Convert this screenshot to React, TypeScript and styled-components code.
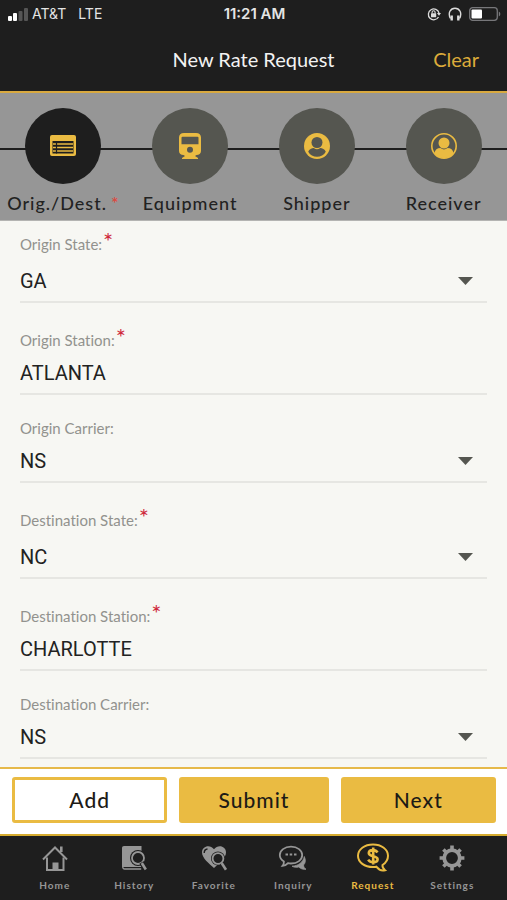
import React, { useId } from "react";
import styled, { createGlobalStyle } from "styled-components";

const gold = "#eabb42";
const ink = "#1e1e1e";

const GlobalStyle = createGlobalStyle`
  *, *::before, *::after { box-sizing: border-box; }
  body {
    margin: 0;
    background: ${ink};
    font-family: Lato, "Liberation Sans", sans-serif;
    font-variant-ligatures: none;
  }
  button, input, select { font: inherit; margin: 0; border: 0; padding: 0; background: none; color: inherit; }
  button { cursor: pointer; }
`;

const Screen = styled.div`
  min-height: 100vh;
  display: flex;
  flex-direction: column;
  background: #f7f7f3;
`;

const StatusBar = styled.div`
  display: grid;
  grid-template-columns: 1fr auto 1fr;
  align-items: center;
  height: 28px;
  padding: 0 6px 0 8px;
  background: ${ink};
  color: #e4e4e4;
  font: 400 14px/20px Inter, "Liberation Sans", sans-serif;
`;

const StatusGroup = styled.div<{ $end?: boolean }>`
  display: flex;
  align-items: center;
  justify-content: ${(p) => (p.$end ? "flex-end" : "flex-start")};
  gap: ${(p) => (p.$end ? 7 : 4)}px;
`;

const Network = styled.span`
  margin-left: 8px;
`;

const Clock = styled.time`
  font-size: 15px;
  font-weight: 600;
`;

const Header = styled.header`
  display: grid;
  grid-template-columns: 1fr auto 1fr;
  align-items: center;
  height: 65px;
  padding: 0 28px 2px;
  background: ${ink};
  border-bottom: 2px solid #d9a93f;
  color: #f2f2f2;
`;

const Title = styled.h1`
  grid-column: 2;
  margin: 0;
  font-size: 20px;
  line-height: 24px;
  font-weight: 400;
`;

const ClearButton = styled.button`
  justify-self: end;
  color: #dcab3a;
  font-size: 20px;
  line-height: 24px;
`;

const Stepper = styled.nav`
  display: grid;
  grid-template-columns: repeat(4, 1fr);
  padding: 15px 0 5px;
  border-bottom: 1px solid #b4b4b2;
  background: linear-gradient(${ink}, ${ink}) 0 55px / 100% 2px no-repeat #969696;
`;

const StepButton = styled.button`
  display: flex;
  flex-direction: column;
  align-items: center;
  gap: 8px;
  color: #222;
`;

const StepDisc = styled.span<{ $active?: boolean }>`
  display: grid;
  place-items: center;
  width: 76px;
  height: 76px;
  border-radius: 50%;
  background: ${(p) => (p.$active ? ink : "#555650")};
  color: ${gold};
`;

const StepLabel = styled.span`
  font-size: 18px;
  line-height: 23px;
  font-weight: 500;
  letter-spacing: 1px;
  white-space: nowrap;
`;

const StepMark = styled.span`
  margin-left: 4px;
  color: #e0453c;
`;

const Form = styled.form`
  flex: 1;
  padding: 10px 20px 8px;
`;

const Field = styled.div<{ $first?: boolean }>`
  padding-top: ${(p) => (p.$first ? 0 : 24)}px;
`;

const FieldLabel = styled.label<{ $required?: boolean }>`
  display: flex;
  align-items: flex-end;
  height: ${(p) => (p.$required ? 23 : 19)}px;
  color: #92928e;
  font-size: 15px;
  line-height: 20px;
`;

const RequiredMark = styled.span`
  align-self: flex-start;
  margin-left: 1px;
  color: #cf2a3c;
  font-size: 24px;
  line-height: 20px;
`;

const ControlRow = styled.div<{ $tall?: boolean }>`
  display: flex;
  align-items: center;
  height: ${(p) => (p.$tall ? 49 : 45)}px;
  padding-top: ${(p) => (p.$tall ? 6 : 2)}px;
  border-bottom: 2px solid #e6e6e2;
  color: #222;
  font-family: Roboto, "Liberation Sans", sans-serif;
  font-size: 20px;
`;

const TextInput = styled.input`
  flex: 1;
  min-width: 0;
  height: 100%;
  outline: none;
`;

const Select = styled.select`
  flex: 1;
  min-width: 0;
  height: 100%;
  appearance: none;
  outline: none;
  padding-right: 32px;
  margin-right: -29px;
`;

const Caret = styled.svg`
  flex: none;
  margin-right: 14px;
  pointer-events: none;
`;

const Actions = styled.div`
  display: grid;
  grid-template-columns: 155fr 149fr 155fr;
  gap: 12px;
  padding: 8px 11px 11px 12px;
  border-top: 2px solid #e6b94a;
  border-bottom: 2px solid #d5ab2f;
  background: #fff;
`;

const ActionButton = styled.button<{ $outline?: boolean }>`
  height: 46px;
  border: 3px solid ${gold};
  border-radius: 3px;
  background: ${(p) => (p.$outline ? "#fff" : gold)};
  color: #1d1b16;
  font-size: 21px;
  line-height: 24px;
  font-weight: 500;
  letter-spacing: 1px;
`;

const TabBar = styled.nav`
  display: grid;
  grid-template-columns: repeat(6, 1fr);
  height: 64px;
  padding: 6px 15px 0;
  background: ${ink};
`;

const Tab = styled.a<{ $active?: boolean }>`
  display: flex;
  flex-direction: column;
  align-items: center;
  gap: 4px;
  color: ${(p) => (p.$active ? gold : "#969696")};
  font-size: 10px;
  line-height: 14px;
  font-weight: 700;
  letter-spacing: 1px;
  text-decoration: none;
`;

const SignalIcon = () => (
  <svg width="20" height="13" viewBox="0 0 20 13" aria-hidden="true">
    <rect x="0" y="8" width="4" height="5" rx="1" fill="#fff" />
    <rect x="5" y="5" width="4" height="8" rx="1" fill="#fff" />
    <rect x="10.500" y="3" width="4" height="10" rx="1" fill="#555" />
    <rect x="16" y="0" width="4" height="13" rx="1" fill="#555" />
  </svg>
);

const LockIcon = () => (
  <svg width="14" height="14" viewBox="0 0 14 14" fill="none" stroke="#dcdcdc" aria-hidden="true">
    <path d="M11.500 10A5.400 5.400 0 1 1 12 6" strokeWidth="1.300" />
    <path d="M9.900 6H14l-2 2.800z" fill="#dcdcdc" stroke="none" />
    <rect x="4" y="6.200" width="5.200" height="4" rx=".5" fill="#dcdcdc" stroke="none" />
    <path d="M5.100 6.400V5.200a1.500 1.500 0 0 1 3 0v1.200" strokeWidth="1.100" />
  </svg>
);

const HeadphonesIcon = () => (
  <svg width="14" height="14" viewBox="0 0 14 14" fill="none" stroke="#dcdcdc" aria-hidden="true">
    <path d="M2.500 11.500C-.5 6 2.500 1.200 7 1.200s7.500 4.800 4.500 10.300" strokeWidth="1.400" />
    <path d="M3.700 8.500v5M10.300 8.500v5" strokeWidth="2.400" />
  </svg>
);

const BatteryIcon = () => (
  <svg width="32" height="14" viewBox="0 0 32 14" aria-hidden="true">
    <rect x=".7" y=".7" width="27.600" height="12.600" rx="3" fill="none" stroke="#77777a" strokeWidth="1.300" />
    <rect x="2.500" y="2.500" width="10.500" height="9" rx="1" fill="#fff" />
    <path d="M29.800 4.500c2 .8 2 4.200 0 5z" fill="#77777a" />
  </svg>
);

const ListIcon = () => (
  <svg width="26" height="22" viewBox="0 0 26 22" aria-hidden="true">
    <path
      fill="currentColor"
      fillRule="evenodd"
      d="M2 0h22a2 2 0 0 1 2 2v17a2 2 0 0 1-2 2H2a2 2 0 0 1-2-2V2a2 2 0 0 1 2-2zM2.500 6v12.500h21V6z"
    />
    <path d="M3 9h20M3 12.500h20M3 16h20" stroke="currentColor" strokeWidth="1.700" />
    <path d="M6.500 6v12.500" stroke={ink} strokeWidth="1.200" />
  </svg>
);

const TrainIcon = () => (
  <svg width="24" height="28" viewBox="0 0 24 28" aria-hidden="true">
    <path
      fill="currentColor"
      fillRule="evenodd"
      d="M6 1h12c3.300 0 5 2 5 4.500V19c0 2.500-2 4-4.500 4l-1.500 1 3 2v1H4v-1l3-2-1.500-1C3 23 1 21.500 1 19V5.500C1 3 2.700 1 6 1zM4.500 4.800a1 1 0 0 0-1 1v6.400h17V5.800a1 1 0 0 0-1-1zM12 14.800a3 3 0 1 0 0 6 3 3 0 0 0 0-6z"
    />
  </svg>
);

const ShipperIcon = () => (
  <svg width="26" height="26" viewBox="0 0 26 26" aria-hidden="true">
    <circle cx="13" cy="13" r="13" fill="currentColor" />
    <circle cx="13" cy="9.500" r="5.500" fill="#555650" />
    <path d="M4.200 18.800c1-2.700 3.600-3.800 5.600-3.800 2 1.700 4.400 1.700 6.400 0 2 0 4.600 1.100 5.600 3.800-3.500 6.700-14.100 6.700-17.600 0z" fill="#555650" />
  </svg>
);

const ReceiverIcon = () => (
  <svg width="26" height="26" viewBox="0 0 26 26" aria-hidden="true">
    <circle cx="13" cy="13" r="12.200" fill="none" stroke="currentColor" strokeWidth="1.600" />
    <circle cx="13" cy="10" r="5.500" fill="currentColor" />
    <path d="M3.500 20.500c.4-3.600 2.800-5.400 5.900-5.400 2.300 1.700 4.900 1.700 7.200 0 3.100 0 5.500 1.800 5.900 5.400-4 6.200-15 6.200-19 0z" fill="currentColor" />
  </svg>
);

const HomeIcon = () => (
  <svg width="32" height="32" viewBox="0 0 32 32" fill="none" stroke="currentColor" aria-hidden="true">
    <path d="M4 17.500 16 5.500l12 12" strokeWidth="2" />
    <path d="M8 15.500V28h16.500V15.500" strokeWidth="2" />
    <path d="M22.300 4.500v5.500" strokeWidth="2.600" />
    <path d="M13.500 20.500h6V28h-6z" fill="currentColor" stroke="none" />
  </svg>
);

const HistoryIcon = () => (
  <svg width="32" height="32" viewBox="0 0 32 32" fill="none" aria-hidden="true">
    <path d="M6 4h17.500v21H4V6c0-1.200.8-2 2-2z" fill="currentColor" />
    <path d="M4.700 24.500c0 2 .8 2.500 2 2.500h16.500" stroke="currentColor" strokeWidth="1.300" />
    <circle cx="20" cy="16" r="8" fill={ink} />
    <circle cx="20" cy="16" r="6" stroke="currentColor" strokeWidth="1.800" />
    <path d="m23.500 20.500 4.500 7.200" stroke={ink} strokeWidth="5" />
    <path d="m23.800 21 4 6.500" stroke="currentColor" strokeWidth="2.600" />
  </svg>
);

const FavoriteIcon = () => (
  <svg width="32" height="32" viewBox="0 0 32 32" fill="none" aria-hidden="true">
    <path d="M16 26C11 21.500 4 16 4 10.500 4 4 12 2 16 7.200c4-5.200 12-3.200 12 3.300C28 16 21 21.500 16 26z" fill="currentColor" />
    <path d="M6.200 11c0-2.300 1.300-3.800 3.300-4" stroke={ink} strokeWidth="1.400" />
    <circle cx="20" cy="16.500" r="7" fill={ink} />
    <circle cx="20" cy="16.500" r="5.400" stroke="currentColor" strokeWidth="1.800" />
    <path d="m24 21 4.500 7" stroke={ink} strokeWidth="5" />
    <path d="m23.600 21 4.400 6.800" stroke="currentColor" strokeWidth="2.600" />
  </svg>
);

const InquiryIcon = () => (
  <svg width="32" height="32" viewBox="0 0 32 32" fill="none" aria-hidden="true">
    <path d="M27.300 14.500c1.700 4 1.200 6.500-.8 8.500.2 2 1 3.200 2.500 4.300-3 .2-5.500-.5-7.200-2.300-2.600.6-4.600.4-6.800-.8 6-.3 11-3.500 12.300-9.700z" fill="currentColor" stroke="currentColor" strokeWidth=".8" />
    <path
      d="M14 4.700c6.400 0 11.200 3.600 11.200 8.400S20.400 21.500 14 21.500c-1 0-2-.1-3-.3-1.500 1.700-3.400 2.700-5.500 2.700 1-1.200 1.500-2.700 1.400-4.400C4.300 18 2.800 15.700 2.800 13.100 2.800 8.300 7.600 4.700 14 4.700z"
      fill={ink}
      stroke="currentColor"
      strokeWidth="1.800"
    />
    <path d="M8.500 12.500h2.500M12.700 12.500h2.500M17 12.500h2.500" stroke="currentColor" strokeWidth="2.200" />
  </svg>
);

const RequestIcon = () => (
  <svg width="32" height="32" viewBox="0 0 32 32" fill="none" stroke="currentColor" aria-hidden="true">
    <path
      d="M16 2.500c8.500 0 15 4.800 15 11.300 0 4-2.300 7.200-5.500 9.200-.3 2.300.5 3.600 2.500 5.200-3.200.8-6.500-.6-8.700-3.500-1 .2-2.100.3-3.300.3-8.500 0-15-4.700-15-11.200S7.500 2.500 16 2.500z"
      strokeWidth="2"
    />
    <path d="M20.500 10.500c-1-1.700-2.500-2.400-4.400-2.400-2.600 0-4.300 1.200-4.300 3 0 4.300 8.800 1.800 8.800 6.100 0 1.900-1.900 3-4.400 3-2.200 0-3.900-.8-5-2.600M16.200 5.500v17" strokeWidth="2.600" />
  </svg>
);

const SettingsIcon = () => (
  <svg width="32" height="32" viewBox="0 0 32 32" fill="none" stroke="currentColor" aria-hidden="true">
    <circle cx="16" cy="16" r="7.800" strokeWidth="3.800" />
    <path
      d="M16 3.600v4M16 24.400v4M3.600 16h4M24.400 16h4M7.400 7.400l2.800 2.800M21.800 21.800l2.800 2.800M24.600 7.400l-2.800 2.800M10.200 21.800l-2.800 2.800"
      strokeWidth="3.600"
    />
  </svg>
);

const steps = [
  { label: "Orig./Dest.", Icon: ListIcon, active: true, required: true },
  { label: "Equipment", Icon: TrainIcon },
  { label: "Shipper", Icon: ShipperIcon },
  { label: "Receiver", Icon: ReceiverIcon },
];

const tabs = [
  { label: "Home", Icon: HomeIcon },
  { label: "History", Icon: HistoryIcon },
  { label: "Favorite", Icon: FavoriteIcon },
  { label: "Inquiry", Icon: InquiryIcon },
  { label: "Request", Icon: RequestIcon, active: true },
  { label: "Settings", Icon: SettingsIcon },
];

interface FieldProps {
  label: string;
  value: string;
  select?: boolean;
  required?: boolean;
  first?: boolean;
}

const fields: FieldProps[] = [
  { label: "Origin State:", value: "GA", select: true, required: true, first: true },
  { label: "Origin Station:", value: "ATLANTA", required: true },
  { label: "Origin Carrier:", value: "NS", select: true },
  { label: "Destination State:", value: "NC", select: true, required: true },
  { label: "Destination Station:", value: "CHARLOTTE", required: true },
  { label: "Destination Carrier:", value: "NS", select: true },
];

function FormField({ label, value, select, required, first }: FieldProps) {
  const id = useId();
  return (
    <Field $first={first}>
      <FieldLabel htmlFor={id} $required={required}>
        {label}
        {required && <RequiredMark>*</RequiredMark>}
      </FieldLabel>
      <ControlRow $tall={select && required}>
        {select ? (
          <>
            <Select id={id} defaultValue={value}>
              <option>{value}</option>
            </Select>
            <Caret width="15" height="8" viewBox="0 0 15 8" aria-hidden="true">
              <path d="M0 0h15L7.500 8z" fill="#555650" />
            </Caret>
          </>
        ) : (
          <TextInput id={id} type="text" defaultValue={value} />
        )}
      </ControlRow>
    </Field>
  );
}

export default function App() {
  return (
    <>
      <GlobalStyle />
      <Screen>
        <StatusBar>
          <StatusGroup>
            <SignalIcon />
            <span>AT&amp;T</span>
            <Network>LTE</Network>
          </StatusGroup>
          <Clock>11:21 AM</Clock>
          <StatusGroup $end>
            <LockIcon />
            <HeadphonesIcon />
            <BatteryIcon />
          </StatusGroup>
        </StatusBar>
        <Header>
          <Title>New Rate Request</Title>
          <ClearButton type="button">Clear</ClearButton>
        </Header>
        <Stepper aria-label="Request steps">
          {steps.map(({ label, Icon, active, required }) => (
            <StepButton key={label} type="button" aria-current={active ? "step" : undefined}>
              <StepDisc $active={active}>
                <Icon />
              </StepDisc>
              <StepLabel>
                {label}
                {required && <StepMark>*</StepMark>}
              </StepLabel>
            </StepButton>
          ))}
        </Stepper>
        <Form id="rate-request">
          {fields.map((field) => (
            <FormField key={field.label} {...field} />
          ))}
        </Form>
        <Actions>
          <ActionButton type="button" $outline>
            Add
          </ActionButton>
          <ActionButton type="submit" form="rate-request">
            Submit
          </ActionButton>
          <ActionButton type="button">Next</ActionButton>
        </Actions>
        <TabBar aria-label="Main">
          {tabs.map(({ label, Icon, active }) => (
            <Tab key={label} href={`#${label.toLowerCase()}`} $active={active}>
              <Icon />
              {label}
            </Tab>
          ))}
        </TabBar>
      </Screen>
    </>
  );
}
